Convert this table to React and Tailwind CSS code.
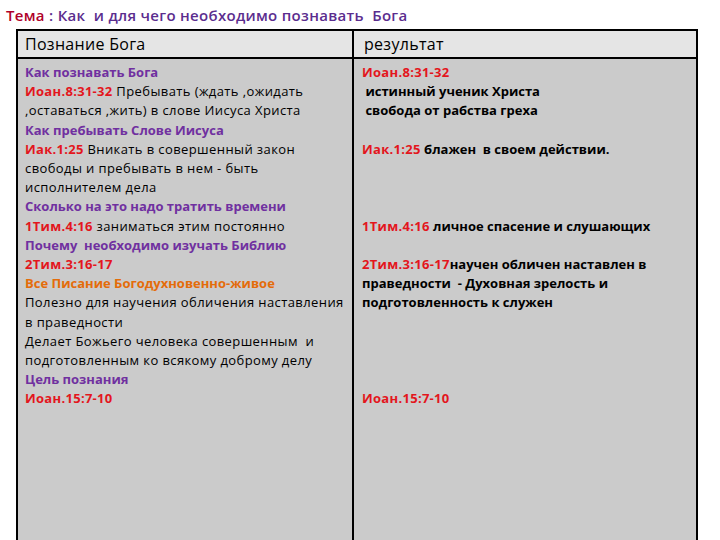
import React from 'react';

const R = ({ children }) => <span className="font-bold tracking-[0.3px] text-[#e3161d]">{children}</span>;
const P = ({ children }) => <div className="font-bold tracking-normal text-[#7030a0]">{children}</div>;

const left = [
  <P key="1">Как познавать Бога</P>,
  <div key="2"><R>Иоан.8:31-32</R> Пребывать (ждать ,ожидать</div>,
  <div key="3">,оставаться ,жить) в слове Иисуса Христа</div>,
  <P key="4">Как пребывать Слове Иисуса</P>,
  <div key="5"><R>Иак.1:25</R> Вникать в совершенный закон</div>,
  <div key="6">свободы и пребывать в нем - быть</div>,
  <div key="7">исполнителем дела</div>,
  <P key="8">Сколько на это надо тратить времени</P>,
  <div key="9"><R>1Тим.4:16</R> заниматься этим постоянно</div>,
  <P key="10">Почему&nbsp; необходимо изучать Библию</P>,
  <div key="11"><R>2Тим.3:16-17</R></div>,
  <div key="12" className="font-bold tracking-normal text-[#e46c0a]">Все Писание Богодухновенно-живое</div>,
  <div key="13">Полезно для научения обличения наставления</div>,
  <div key="14">в праведности</div>,
  <div key="15">Делает Божьего человека совершенным&nbsp; и</div>,
  <div key="16">подготовленным ко всякому доброму делу</div>,
  <P key="17">Цель познания</P>,
  <div key="18"><R>Иоан.15:7-10</R></div>,
];

const Blank = () => <div>&nbsp;</div>;

const right = [
  <div key="1"><R>Иоан.8:31-32</R></div>,
  <div key="2">&nbsp;истинный ученик Христа</div>,
  <div key="3">&nbsp;свобода от рабства греха</div>,
  <Blank key="4" />,
  <div key="5"><R>Иак.1:25</R> блажен&nbsp; в своем действии.</div>,
  <Blank key="6" />,
  <Blank key="7" />,
  <Blank key="8" />,
  <div key="9"><R>1Тим.4:16</R> личное спасение и слушающих</div>,
  <Blank key="10" />,
  <div key="11"><R>2Тим.3:16-17</R>научен обличен наставлен в</div>,
  <div key="12">праведности&nbsp; - Духовная зрелость и</div>,
  <div key="13">подготовленность к служен</div>,
  <Blank key="14" />,
  <Blank key="15" />,
  <Blank key="16" />,
  <Blank key="17" />,
  <div key="18"><R>Иоан.15:7-10</R></div>,
];

export default function App() {
  return (
    <div className="w-[720px] h-[540px] overflow-hidden bg-white font-['Open_Sans',sans-serif]">
      <div className="h-[29px] pl-[6px] pt-[5px] text-[15px] leading-[20px] tracking-[0.3px] font-semibold">
        <span className="text-[#b0002a]">Тема</span>
        <span className="text-[#5b2d8e]"> : Как&nbsp; и для чего необходимо познавать&nbsp; Бога</span>
      </div>
      <div className="ml-[16px] w-[682px] border-x-2 border-t-2 border-black">
        <div className="grid grid-cols-[336px_1fr] h-[28px] bg-[#e5e5e5] border-b-2 border-black text-[16px] tracking-[0.3px] text-black">
          <div className="pl-[7px] flex items-center border-r-2 border-black">Познание Бога</div>
          <div className="pl-[10px] flex items-center">результат</div>
        </div>
        <div className="grid grid-cols-[336px_1fr] h-[500px] bg-[#cbcbcb] text-[13px] leading-[19.2px] text-black whitespace-nowrap">
          <div className="pl-[7px] pt-[4px] tracking-[0.4px] border-r-2 border-black">{left}</div>
          <div className="pl-[8px] pt-[4px] font-bold">{right}</div>
        </div>
      </div>
    </div>
  );
}
